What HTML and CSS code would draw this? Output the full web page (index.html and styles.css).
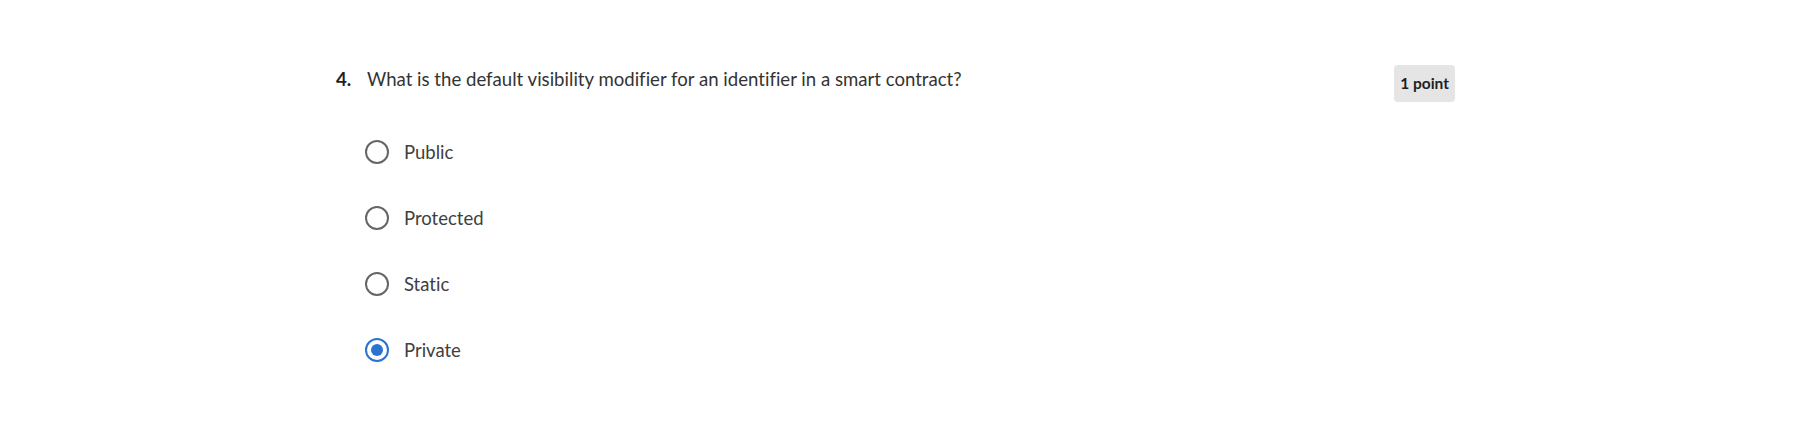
FILE: index.html
```html
<!DOCTYPE html>
<html lang="en">
<head>
<meta charset="utf-8">
<title>Question 4</title>
<link rel="stylesheet" href="styles.css">
</head>
<body>
<div class="page">
  <div class="question">
    <div class="qhead">
      <span class="qnum">4.</span>
      <span class="qtext">What is the default visibility modifier for an identifier in a smart contract?</span>
    </div>
    <span class="badge">1 point</span>
  </div>
  <div class="options">
    <label class="option"><span class="radio"></span><span class="label">Public</span></label>
    <label class="option"><span class="radio"></span><span class="label">Protected</span></label>
    <label class="option"><span class="radio"></span><span class="label">Static</span></label>
    <label class="option"><span class="radio checked"></span><span class="label">Private</span></label>
  </div>
</div>
</body>
</html>
```
FILE: styles.css
```css
html, body {
  margin: 0;
  padding: 0;
  background: #ffffff;
}
body {
  font-family: Lato, "Liberation Sans", sans-serif;
  font-variant-ligatures: none;
  color: #333333;
}
.page {
  padding: 65px 0 0 336px;
  width: 1119px;
}
.question {
  display: flex;
  justify-content: space-between;
  align-items: flex-start;
  height: 37px;
}
.qhead {
  display: flex;
  align-items: baseline;
  margin-top: 2px;
  font-size: 18.6px;
  line-height: 24px;
}
.qnum {
  width: 31px;
  font-weight: 700;
  color: #1f1f1f;
}
.qtext {
  color: #333333;
}
.badge {
  background: #e5e5e5;
  border-radius: 4px;
  padding: 0 6px;
  height: 37px;
  line-height: 37px;
  font-size: 15.5px;
  font-weight: 700;
  color: #1f1f1f;
}
.options {
  display: flex;
  flex-direction: column;
  gap: 42px;
  margin: 38px 0 0 29px;
}
.option {
  display: flex;
  align-items: center;
  gap: 15px;
  height: 24px;
  font-size: 18.5px;
  color: #404040;
}
.radio {
  box-sizing: border-box;
  width: 24px;
  height: 24px;
  border: 2.5px solid #666666;
  border-radius: 50%;
  display: flex;
  align-items: center;
  justify-content: center;
}
.radio.checked {
  border-color: #2a73d1;
}
.radio.checked::after {
  content: "";
  width: 12px;
  height: 12px;
  border-radius: 50%;
  background: #2a73d1;
}
```
